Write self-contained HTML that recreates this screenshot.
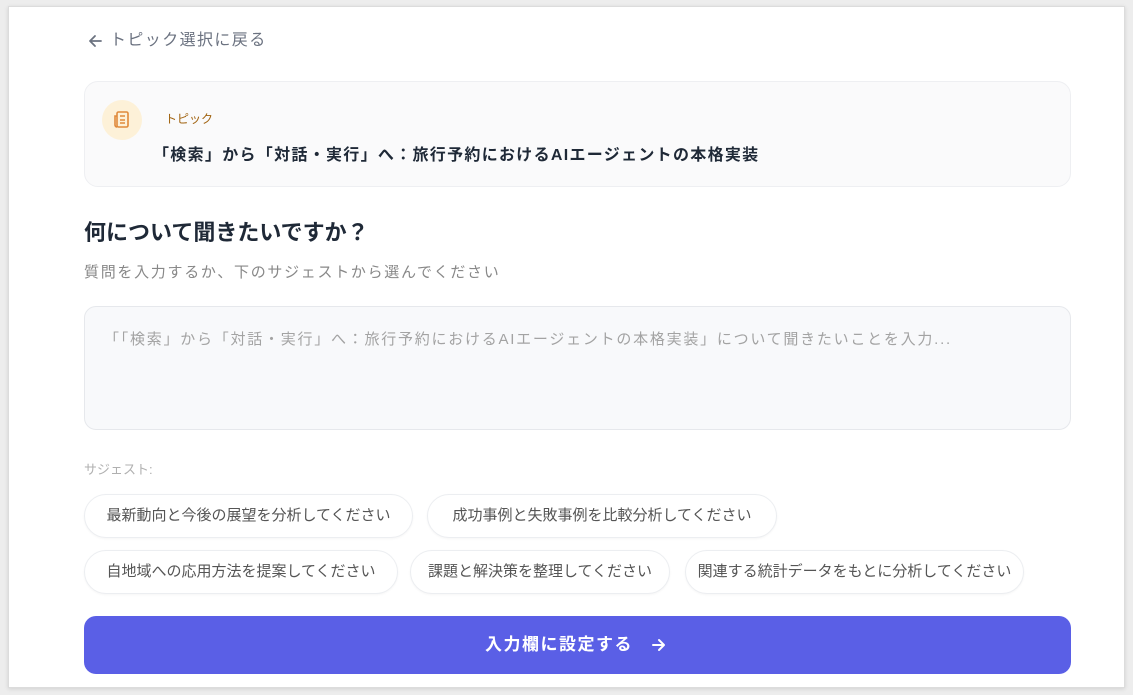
<!DOCTYPE html>
<html><head><meta charset="utf-8"><style>
*{box-sizing:border-box;margin:0;padding:0}
body{width:1133px;height:695px;background:#ededed;font-family:"Liberation Sans","Noto Sans CJK JP",sans-serif;position:relative;overflow:hidden}
.card{position:absolute;left:8px;top:6px;width:1117px;height:682px;background:#fff;border:1px solid #dcdcdc;box-shadow:0 1px 4px rgba(0,0,0,.12)}
.abs{position:absolute;white-space:nowrap}
.back{left:110px;top:30px;font-size:16px;color:#6b7280;line-height:22px;letter-spacing:1.4px}
.topic{left:84px;top:81px;width:987px;height:106px;background:#fafafb;border:1px solid #eeeff2;border-radius:14px}
.ic{left:102px;top:100px;width:40px;height:40px;border-radius:50%;background:#fdf1d8}
.tl{left:165px;top:111px;font-size:12px;color:#a0620f;line-height:16px}
.tt{left:153px;top:145px;font-size:16px;font-weight:bold;color:#1f2937;line-height:22px;letter-spacing:1.3px}
.h{left:84px;top:218px;font-size:22px;font-weight:bold;color:#1f2937;line-height:30px}
.sub{left:84px;top:263px;font-size:15px;color:#888;line-height:20px;letter-spacing:1.7px}
.ta{left:84px;top:306px;width:987px;height:124px;background:#f8f9fb;border:1px solid #e6e8ec;border-radius:12px}
.ph{left:104px;top:330px;font-size:15px;color:#a3a3a3;line-height:20px;letter-spacing:1.75px}
.sg{left:84px;top:461px;font-size:13px;color:#b0b0b0;line-height:18px}
.chip{position:absolute;height:44px;border:1px solid #eceef1;border-radius:22px;background:#fff;font-size:15px;color:#555;line-height:42px;text-align:center;box-shadow:0 1px 2px rgba(0,0,0,.04);white-space:nowrap}
.btn{left:84px;top:616px;width:987px;height:58px;background:#5a5fe6;border-radius:12px;color:#fff;font-size:17px;font-weight:bold;line-height:58px}
</style></head><body>
<div class="card"></div>
<svg class="abs" style="left:87px;top:33px" width="16" height="16" viewBox="0 0 16 16"><path d="M14 8H3M8 3L3 8l5 5" fill="none" stroke="#6b7280" stroke-width="1.8" stroke-linecap="round" stroke-linejoin="round"/></svg>
<div class="abs back">トピック選択に戻る</div>
<div class="abs topic"></div>
<div class="abs ic"><svg width="40" height="40" viewBox="0 0 40 40"><g fill="none" stroke="#e08a3a" stroke-width="1.6"><rect x="15" y="12" width="11" height="15" rx="1.5"/><path d="M15 16h-2v9a2 2 0 0 0 2 2"/><path d="M18 16h5M18 20h5M18 23h5"/></g></svg></div>
<div class="abs tl">トピック</div>
<div class="abs tt">「検索」から「対話・実行」へ：旅行予約におけるAIエージェントの本格実装</div>
<div class="abs h">何について聞きたいですか？</div>
<div class="abs sub">質問を入力するか、下のサジェストから選んでください</div>
<div class="abs ta"></div>
<div class="abs ph">「「検索」から「対話・実行」へ：旅行予約におけるAIエージェントの本格実装」について聞きたいことを入力...</div>
<div class="abs sg">サジェスト:</div>
<div class="chip" style="left:84px;top:494px;width:329px">最新動向と今後の展望を分析してください</div>
<div class="chip" style="left:427px;top:494px;width:350px">成功事例と失敗事例を比較分析してください</div>
<div class="chip" style="left:84px;top:550px;width:314px">自地域への応用方法を提案してください</div>
<div class="chip" style="left:410px;top:550px;width:260px">課題と解決策を整理してください</div>
<div class="chip" style="left:685px;top:550px;width:339px">関連する統計データをもとに分析してください</div>
<div class="abs btn"><span style="position:absolute;left:401px;letter-spacing:1.5px">入力欄に設定する</span><svg style="position:absolute;left:567px;top:21px" width="16" height="16" viewBox="0 0 16 16"><path d="M2 8h11M8 3l5 5-5 5" fill="none" stroke="#fff" stroke-width="2" stroke-linecap="round" stroke-linejoin="round"/></svg></div>
</body></html>
